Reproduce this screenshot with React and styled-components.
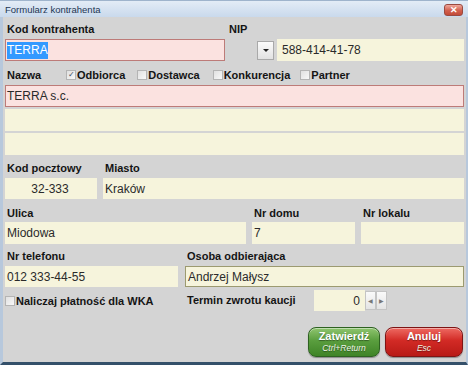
import styled, { createGlobalStyle } from "styled-components";

const GlobalStyle = createGlobalStyle`
  html, body { margin: 0; padding: 0; }
  body {
    width: 468px;
    height: 365px;
    overflow: hidden;
    font-family: "Liberation Sans", Arial, sans-serif;
  }
`;

const Window = styled.div`
  width: 468px;
  height: 365px;
  display: flex;
  flex-direction: column;
  box-sizing: border-box;
`;

const TitleBar = styled.div`
  height: 17px;
  flex-shrink: 0;
  display: flex;
  align-items: center;
  justify-content: space-between;
  padding: 0 5px 0 5px;
  background: linear-gradient(#e3ecf6, #c9d9ec);
  border-top: 1px solid #9fb4cc;
  box-sizing: border-box;
  font-size: 9.5px;
  color: #1d3552;
`;

const CloseBtn = styled.div`
  width: 19px;
  height: 12px;
  margin-top: 2px;
  border-radius: 3px;
  border: 1px solid #9a4a40;
  background: linear-gradient(#f0a89c, #d2604e 55%, #c24a38);
  color: #fff;
  font-size: 9px;
  font-weight: bold;
  display: flex;
  align-items: center;
  justify-content: center;
  box-sizing: border-box;
`;

const Frame = styled.div`
  flex: 1;
  display: flex;
  flex-direction: column;
  background: #d4d4d4;
  border-left: 3px solid #b7c8dc;
  border-right: 2px solid #b7c8dc;
  border-bottom: 3px solid #34506a;
  padding: 0 2px 0 2px;
`;

const Label = styled.div`
  font-size: 11px;
  font-weight: bold;
  line-height: 13px;
  color: #141414;
  padding-left: ${(p) => p.$indent ?? 2}px;
  white-space: nowrap;
`;

const Group = styled.div`
  display: flex;
  flex-direction: column;
  gap: ${(p) => p.$gap ?? 3}px;
  min-width: 0;
`;

const Field = styled.div`
  height: ${(p) => p.$h ?? 21}px;
  box-sizing: border-box;
  background: ${(p) => (p.$error ? "#fbe2e0" : "#f6f4dc")};
  border: 1px solid
    ${(p) => (p.$error ? "#bd7b78" : p.$focus ? "#9c9a70" : "#f6f4dc")};
  font-size: 12px;
  color: #2a2a2a;
  display: flex;
  align-items: center;
  justify-content: ${(p) => (p.$align === "center" ? "center" : p.$align === "right" ? "flex-end" : "flex-start")};
  padding: 0 3px 0 1px;
  white-space: nowrap;
  overflow: hidden;
  flex: ${(p) => (p.$grow ? 1 : "none")};
  width: ${(p) => (p.$w ? `${p.$w}px` : "auto")};
`;

const Selected = styled.span`
  background: #3399ff;
  color: #fff;
  line-height: 17px;
`;

const Row = styled.div`
  display: grid;
  grid-template-columns: ${(p) => p.$cols};
  column-gap: ${(p) => p.$gap ?? 6}px;
  margin-top: ${(p) => p.$mt ?? 0}px;
  align-items: ${(p) => p.$align ?? "stretch"};
`;

const Inline = styled.div`
  display: flex;
  align-items: center;
  gap: ${(p) => p.$gap ?? 0}px;
`;

const DropBtn = styled.div`
  width: 17px;
  height: 19px;
  margin-left: 28px;
  margin-right: 3px;
  box-sizing: border-box;
  border: 1px solid #a9a9a9;
  background: linear-gradient(#fbfbfb, #e2e2e2);
  display: flex;
  align-items: center;
  justify-content: center;
  &::after {
    content: "";
    border-left: 3px solid transparent;
    border-right: 3px solid transparent;
    border-top: 3px solid #222;
  }
`;

const CheckHeader = styled.div`
  display: flex;
  align-items: center;
  height: 16px;
  margin-top: 6px;
`;

const CheckItem = styled.label`
  display: flex;
  align-items: center;
  font-size: 11px;
  font-weight: bold;
  color: #141414;
  margin-right: ${(p) => p.$mr ?? 12}px;
  white-space: nowrap;
`;

const Box = styled.span`
  width: 10px;
  height: 10px;
  box-sizing: border-box;
  border: 1px solid #b4b4b4;
  background: linear-gradient(135deg, #e0e0e0, #f8f8f8);
  margin-right: 1px;
  display: inline-flex;
  align-items: center;
  justify-content: center;
  font-size: 8px;
  font-weight: normal;
  color: #3c4a66;
  line-height: 1;
`;

const Check = ({ checked, children, mr }) => (
  <CheckItem $mr={mr}>
    <Box>{checked ? "✓" : ""}</Box>
    {children}
  </CheckItem>
);

const SpinBtn = styled.div`
  width: 11px;
  height: 19px;
  box-sizing: border-box;
  border: 1px solid #c4c4c4;
  background: linear-gradient(#fafafa, #e4e4e4);
  font-size: 6px;
  color: #777;
  display: flex;
  align-items: center;
  justify-content: center;
`;

const Footer = styled.div`
  margin-top: 16px;
  display: flex;
  justify-content: flex-end;
  gap: 5px;
  padding-right: 1px;
`;

const Button = styled.div`
  width: ${(p) => p.$w}px;
  height: 30px;
  box-sizing: border-box;
  border-radius: 8px;
  border: 1px solid ${(p) => (p.$red ? "#7e1414" : "#2e6221")};
  background: ${(p) =>
    p.$red
      ? "linear-gradient(#ee6a62, #d22a25 45%, #b81a16)"
      : "linear-gradient(#8fc56f, #5a9e3e 45%, #3f8427)"};
  box-shadow: inset 0 1px 0 rgba(255, 255, 255, 0.45), 0 1px 1px rgba(0, 0, 0, 0.35);
  color: #fff;
  display: flex;
  flex-direction: column;
  align-items: center;
  justify-content: center;
  text-shadow: 0 1px 1px rgba(0, 0, 0, 0.4);
`;

const BtnTitle = styled.div`
  font-size: 11px;
  font-weight: bold;
  line-height: 13px;
`;

const BtnHint = styled.div`
  font-size: 8.5px;
  font-style: italic;
  line-height: 11px;
  color: #eef5e8;
`;

export default function App() {
  return (
    <>
      <GlobalStyle />
      <Window>
        <TitleBar>
          <span>Formularz kontrahenta</span>
          <CloseBtn>✕</CloseBtn>
        </TitleBar>
        <Frame>
          <Row $cols="220px 1fr" $gap={4} $mt={6}>
            <Group>
              <Label>Kod kontrahenta</Label>
              <Field $error $h={22}>
                <Selected>TERRA</Selected>
              </Field>
            </Group>
            <Group>
              <Label $indent={0}>NIP</Label>
              <Inline>
                <DropBtn />
                <Field $grow $h={22} style={{ paddingLeft: 4 }}>588-414-41-78</Field>
              </Inline>
            </Group>
          </Row>

          <CheckHeader>
            <Label style={{ width: 59 }}>Nazwa</Label>
            <Check checked>Odbiorca</Check>
            <Check mr={13}>Dostawca</Check>
            <Check mr={10}>Konkurencja</Check>
            <Check>Partner</Check>
          </CheckHeader>

          <Group $gap={2} style={{ marginTop: 2 }}>
            <Field $error $h={22}>TERRA s.c.</Field>
            <Field $h={22} />
            <Field $h={22} />
          </Group>

          <Row $cols="92px 1fr" $mt={7}>
            <Group>
              <Label>Kod pocztowy</Label>
              <Field $align="center">32-333</Field>
            </Group>
            <Group>
              <Label>Miasto</Label>
              <Field>Kraków</Field>
            </Group>
          </Row>

          <Row $cols="241px 103px 1fr" $mt={8}>
            <Group $gap={2}>
              <Label>Ulica</Label>
              <Field $h={22}>Miodowa</Field>
            </Group>
            <Group $gap={2}>
              <Label>Nr domu</Label>
              <Field $h={22}>7</Field>
            </Group>
            <Group $gap={2}>
              <Label>Nr lokalu</Label>
              <Field $h={22} />
            </Group>
          </Row>

          <Row $cols="173px 1fr" $gap={7} $mt={6}>
            <Group>
              <Label>Nr telefonu</Label>
              <Field>012 333-44-55</Field>
            </Group>
            <Group>
              <Label>Osoba odbierająca</Label>
              <Field $focus style={{ paddingLeft: 2 }}>Andrzej Małysz</Field>
            </Group>
          </Row>

          <Row $cols="173px 1fr" $gap={7} $mt={3} $align="center">
            <Inline>
              <Check>Naliczaj płatność dla WKA</Check>
            </Inline>
            <Inline>
              <Label style={{ width: 127 }}>Termin zwrotu kaucji</Label>
              <Field $w={51} $align="right" style={{ paddingRight: 4 }}>0</Field>
              <SpinBtn>◀</SpinBtn>
              <SpinBtn>▶</SpinBtn>
            </Inline>
          </Row>

          <Footer>
            <Button $w={72}>
              <BtnTitle>Zatwierdź</BtnTitle>
              <BtnHint>Ctrl+Return</BtnHint>
            </Button>
            <Button $w={78} $red>
              <BtnTitle>Anuluj</BtnTitle>
              <BtnHint>Esc</BtnHint>
            </Button>
          </Footer>
        </Frame>
      </Window>
    </>
  );
}
